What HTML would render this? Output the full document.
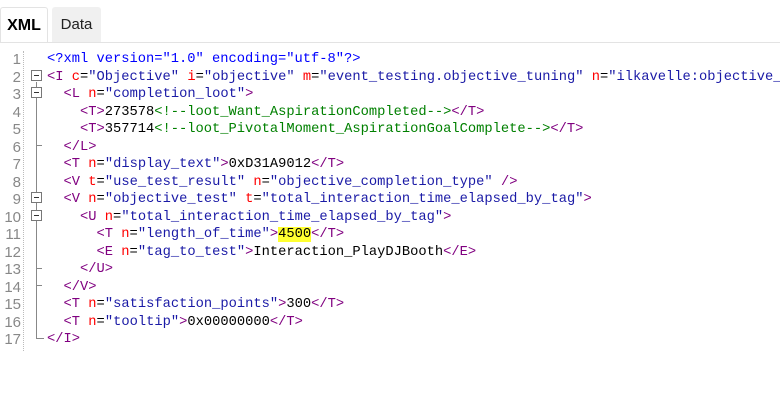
<!DOCTYPE html>
<html><head><style>
body{margin:0;width:780px;height:400px;background:#fff;overflow:hidden;position:relative;font-family:"Liberation Sans",sans-serif}
.tab{position:absolute;top:7px;height:35px;font-size:15px;line-height:35px;text-align:center}
#t1{left:0;width:46px;font-weight:bold;font-size:16px;background:#fff;border:1px solid #e3e3e3;border-bottom:none;border-radius:3px 3px 0 0;top:7px}
#t2{left:52px;width:49px;background:#f0f0f0;color:#222;border-radius:3px 3px 0 0}
#bar{position:absolute;left:0;right:0;top:42px;border-top:1px solid #e3e3e3}
.ln{position:absolute;left:0;width:21px;text-align:right;color:#888;font-family:"Liberation Sans",sans-serif;font-size:15px;height:17.5px;line-height:17.5px}
.c{position:absolute;left:47px;white-space:pre;font-family:"Liberation Mono",monospace;font-size:13.75px;height:17.5px;line-height:17.5px;color:#000}
#sep{position:absolute;left:23px;top:51px;height:300px;border-left:1px dotted #bbb}
.b{color:#00f}.p{color:#800080}.r{color:#f00}.v{color:#1a1aa6}.g{color:#008000}
.box{position:absolute;left:31px;width:9px;height:9px;border:1px solid #777;background:#fff}
.box:after{content:"";position:absolute;left:2px;top:4px;width:5px;height:1px;background:#333}
.vl{position:absolute;left:36px;border-left:1px solid #888}
.hl{position:absolute;left:36px;width:6px;border-top:1px solid #888}
.y{background:#ffff30}
</style></head><body>
<div class="tab" id="t1">XML</div><div class="tab" id="t2">Data</div><div id="bar"></div>
<div id="sep"></div>
<div class="vl" style="top:82px;height:253px"></div>
<div class="hl" style="top:145px"></div>
<div class="hl" style="top:285px"></div>
<div class="hl" style="top:268px"></div>
<div class="hl" style="top:338px;width:8px"></div>
<div class="vl" style="top:335px;height:3px"></div>
<div class="box" style="top:70px"></div>
<div class="box" style="top:87px"></div>
<div class="box" style="top:192px"></div>
<div class="box" style="top:210px"></div>
<div class="ln" style="top:51px">1</div><div class="ln" style="top:68.5px">2</div><div class="ln" style="top:86px">3</div><div class="ln" style="top:103.5px">4</div><div class="ln" style="top:121px">5</div><div class="ln" style="top:138.5px">6</div><div class="ln" style="top:156px">7</div><div class="ln" style="top:173.5px">8</div><div class="ln" style="top:191px">9</div><div class="ln" style="top:208.5px">10</div><div class="ln" style="top:226px">11</div><div class="ln" style="top:243.5px">12</div><div class="ln" style="top:261px">13</div><div class="ln" style="top:278.5px">14</div><div class="ln" style="top:296px">15</div><div class="ln" style="top:313.5px">16</div><div class="ln" style="top:331px">17</div>
<div class="c" style="top:51px"><span class="b">&lt;?xml version="1.0" encoding="utf-8"?&gt;</span></div>
<div class="c" style="top:68.5px"><span class="p">&lt;I </span><span class="r">c</span>=<span class="v">"Objective"</span> <span class="r">i</span>=<span class="v">"objective"</span> <span class="r">m</span>=<span class="v">"event_testing.objective_tuning"</span> <span class="r">n</span>=<span class="v">"ilkavelle:objective_</span></div>
<div class="c" style="top:86px">  <span class="p">&lt;L </span><span class="r">n</span>=<span class="v">"completion_loot"</span><span class="p">&gt;</span></div>
<div class="c" style="top:103.5px">    <span class="p">&lt;T&gt;</span>273578<span class="g">&lt;!--loot_Want_AspirationCompleted--&gt;</span><span class="p">&lt;/T&gt;</span></div>
<div class="c" style="top:121px">    <span class="p">&lt;T&gt;</span>357714<span class="g">&lt;!--loot_PivotalMoment_AspirationGoalComplete--&gt;</span><span class="p">&lt;/T&gt;</span></div>
<div class="c" style="top:138.5px">  <span class="p">&lt;/L&gt;</span></div>
<div class="c" style="top:156px">  <span class="p">&lt;T </span><span class="r">n</span>=<span class="v">"display_text"</span><span class="p">&gt;</span>0xD31A9012<span class="p">&lt;/T&gt;</span></div>
<div class="c" style="top:173.5px">  <span class="p">&lt;V </span><span class="r">t</span>=<span class="v">"use_test_result"</span> <span class="r">n</span>=<span class="v">"objective_completion_type"</span> <span class="p">/&gt;</span></div>
<div class="c" style="top:191px">  <span class="p">&lt;V </span><span class="r">n</span>=<span class="v">"objective_test"</span> <span class="r">t</span>=<span class="v">"total_interaction_time_elapsed_by_tag"</span><span class="p">&gt;</span></div>
<div class="c" style="top:208.5px">    <span class="p">&lt;U </span><span class="r">n</span>=<span class="v">"total_interaction_time_elapsed_by_tag"</span><span class="p">&gt;</span></div>
<div class="c" style="top:226px">      <span class="p">&lt;T </span><span class="r">n</span>=<span class="v">"length_of_time"</span><span class="p">&gt;</span><span class="y">4500</span><span class="p">&lt;/T&gt;</span></div>
<div class="c" style="top:243.5px">      <span class="p">&lt;E </span><span class="r">n</span>=<span class="v">"tag_to_test"</span><span class="p">&gt;</span>Interaction_PlayDJBooth<span class="p">&lt;/E&gt;</span></div>
<div class="c" style="top:261px">    <span class="p">&lt;/U&gt;</span></div>
<div class="c" style="top:278.5px">  <span class="p">&lt;/V&gt;</span></div>
<div class="c" style="top:296px">  <span class="p">&lt;T </span><span class="r">n</span>=<span class="v">"satisfaction_points"</span><span class="p">&gt;</span>300<span class="p">&lt;/T&gt;</span></div>
<div class="c" style="top:313.5px">  <span class="p">&lt;T </span><span class="r">n</span>=<span class="v">"tooltip"</span><span class="p">&gt;</span>0x00000000<span class="p">&lt;/T&gt;</span></div>
<div class="c" style="top:331px"><span class="p">&lt;/I&gt;</span></div>
</body></html>
